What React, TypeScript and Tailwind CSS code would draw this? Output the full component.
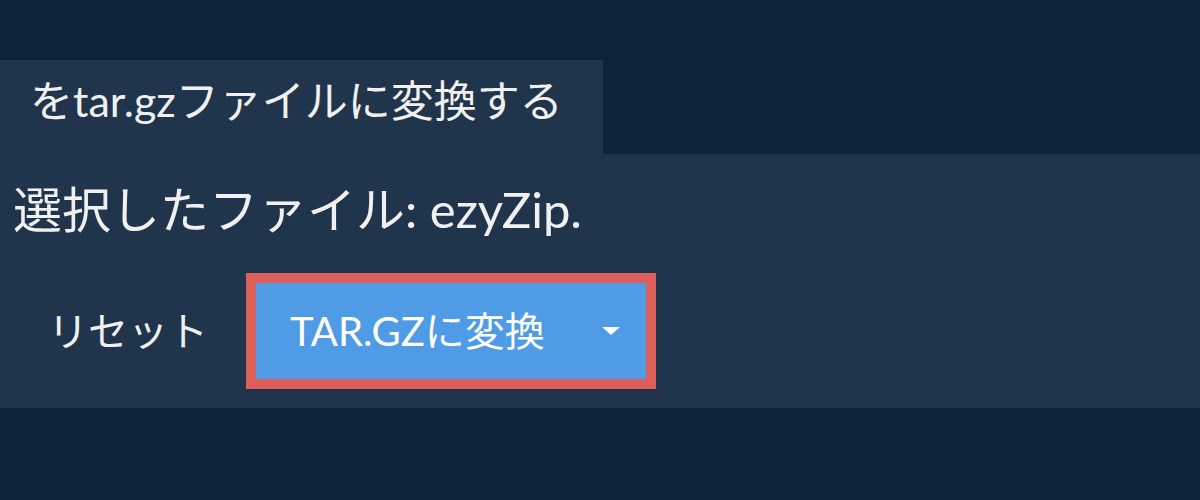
export default function App() {
  const font = { fontFamily: 'Lato, "Noto Sans CJK JP", sans-serif' };
  return (
    <div className="w-[1200px] h-[500px] bg-[#0f2439] pt-[60px] text-[#f0f0f0]" style={font}>
      <div className="w-[603px] h-[94px] bg-[#20354b] flex items-center pl-[30px] pb-[12px] text-[43px] leading-[50px]">
        をtar.gzファイルに変換する
      </div>
      <div className="h-[254px] bg-[#20354b] flex flex-col">
        <div className="pl-[13px] pt-[27px] text-[49px] leading-[56px] whitespace-nowrap">選択したファイル: ezyZip.</div>
        <div className="flex items-center mt-[36px]">
          <div className="ml-[48px] text-[40px] w-[198px] leading-[48px]">リセット</div>
          <div className="border-[10px] border-[#dc5f5c]">
            <button className="w-[390px] h-[96px] bg-[#4f9be6] flex items-center pl-[34px] pr-[26px] text-white text-[40px] leading-[48px]">
              <span>TAR.GZに変換</span>
              <span className="ml-auto w-0 h-0 border-l-[9px] border-r-[9px] border-t-[8px] border-l-transparent border-r-transparent border-t-white" />
            </button>
          </div>
        </div>
      </div>
    </div>
  );
}
